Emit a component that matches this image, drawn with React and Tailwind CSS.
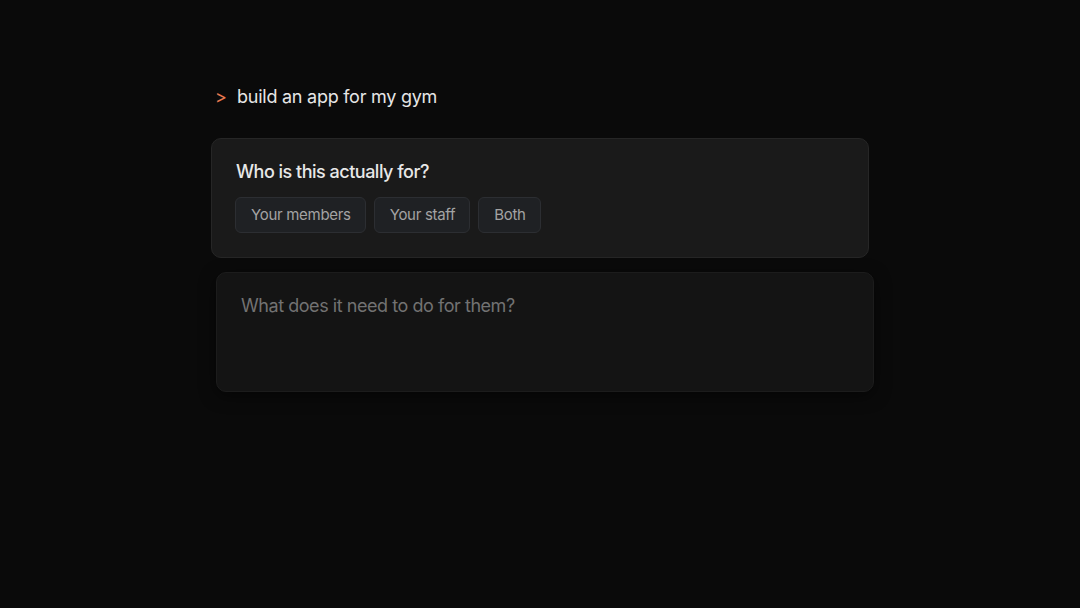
export default function App() {
  const chips = ["Your members", "Your staff", "Both"];
  return (
    <div
      className="w-[1080px] h-[608px] bg-[#0a0a0a] overflow-hidden"
      style={{ fontFamily: "Inter, 'Noto Sans', sans-serif" }}
    >
      <div className="pl-[211px] pt-[84px] w-[874px]">
        <div className="flex items-center h-[26px] pl-[4px]">
          <span className="text-[18px] text-[#e8794f] w-[22px] leading-[26px]">&gt;</span>
          <span className="text-[18px] text-[#e6e6e6] leading-[26px] tracking-[-0.25px]">build an app for my gym</span>
        </div>
        <div className="mt-[28px] w-[658px] rounded-[10px] border border-[#262626] bg-[#1a1a1a] px-6 pt-5 pb-6">
          <div className="text-[18px] leading-[26px] font-medium text-[#e8e8e8] tracking-[-0.5px]">Who is this actually for?</div>
          <div className="mt-3 -ml-px flex gap-2">
            {chips.map((c) => (
              <div
                key={c}
                className="h-[36px] flex items-center pl-[15px] pr-[14px] rounded-[6px] border border-[#2c2e32] bg-[#1f2124] text-[15px] tracking-[-0.3px] text-[#a3a3a3]"
              >
                {c}
              </div>
            ))}
          </div>
        </div>
        <div className="mt-[14px] ml-[5px] w-[658px] h-[120px] rounded-[10px] border border-[#1c1c1c] bg-[#141414] px-6 pt-5 shadow-[0_4px_16px_rgba(0,0,0,0.5)]">
          <div className="text-[18px] leading-[26px] text-[#727272] tracking-[-0.45px]">What does it need to do for them?</div>
        </div>
      </div>
    </div>
  );
}
